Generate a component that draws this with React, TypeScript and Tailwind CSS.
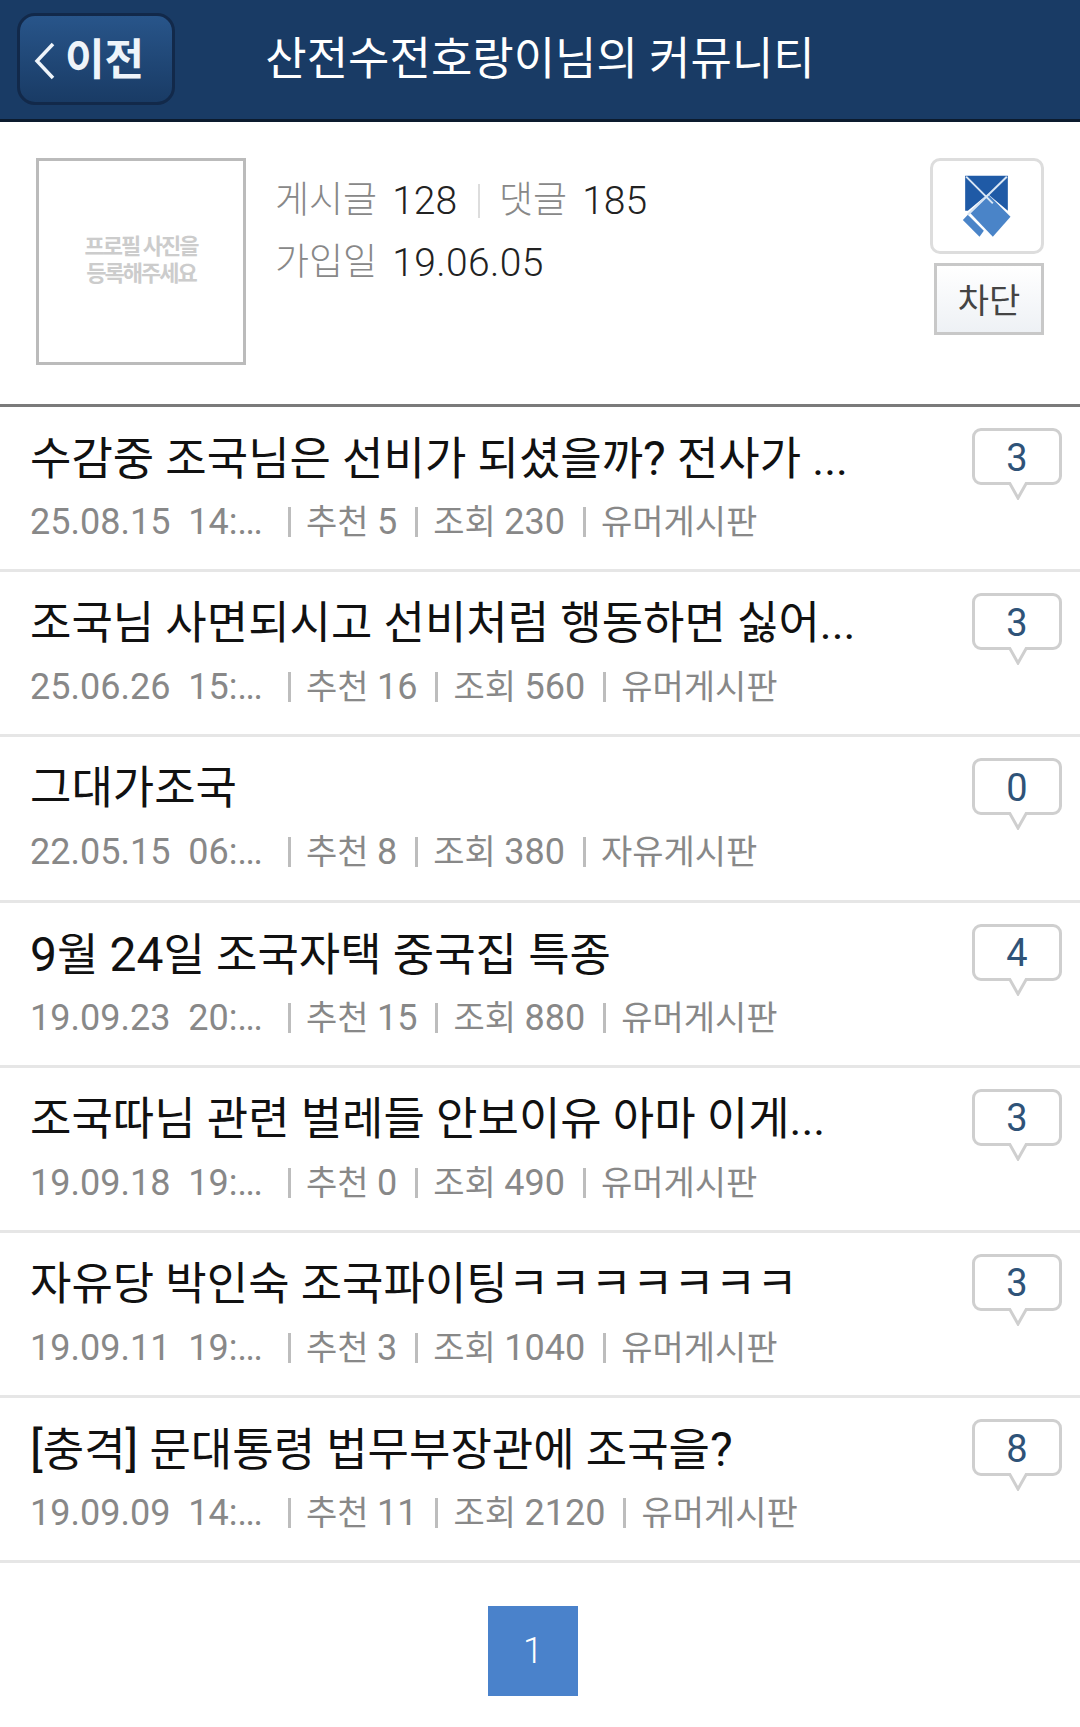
const posts = [
  { title: "수감중 조국님은 선비가 되셨을까? 전사가 ...", date: "25.08.15  14:...", like: 5, view: 230, board: "유머게시판", count: 3 },
  { title: "조국님 사면되시고 선비처럼 행동하면 싫어...", date: "25.06.26  15:...", like: 16, view: 560, board: "유머게시판", count: 3 },
  { title: "그대가조국", date: "22.05.15  06:...", like: 8, view: 380, board: "자유게시판", count: 0 },
  { title: "9월 24일 조국자택 중국집 특종", date: "19.09.23  20:...", like: 15, view: 880, board: "유머게시판", count: 4 },
  { title: "조국따님 관련 벌레들 안보이유 아마 이게...", date: "19.09.18  19:...", like: 0, view: 490, board: "유머게시판", count: 3 },
  { title: "자유당 박인숙 조국파이팅ㅋㅋㅋㅋㅋㅋㅋ", date: "19.09.11  19:...", like: 3, view: 1040, board: "유머게시판", count: 3 },
  { title: "[충격] 문대통령 법무부장관에 조국을?", date: "19.09.09  14:...", like: 11, view: 2120, board: "유머게시판", count: 8 },
]

const Sep = () => <span className="ml-[18px] mr-[15px] inline-block h-[30px] w-[3px] bg-[#bdbdbd]" />

const Bubble = ({ count }: { count: number }) => (
  <div className="relative flex h-[57px] w-[90px] items-center justify-center rounded-[9px] border-[3px] border-[#cfcfcf] bg-white pt-[2px] text-[38px] leading-none text-[#2f5378]">
    {count}
    <svg className="absolute left-[33px] top-[51px]" width="20" height="18" viewBox="0 0 20 18">
      <path d="M1 0 L10 16 L19 0" fill="#fff" stroke="#cfcfcf" strokeWidth="3" />
    </svg>
  </div>
)

// digits and brackets sit a bit larger than the hangul in the titles
const Title = ({ text }: { text: string }) => (
  <>
    {text.split(/([0-9\[\]?]+)/).map((part, i) =>
      i % 2 ? <span key={i} className="text-[48px]">{part}</span> : part
    )}
  </>
)

const PostRow = ({ post }: { post: (typeof posts)[number] }) => (
  <div className="flex h-[165.2px] justify-between border-b-[3px] border-[#e6e6e6] pl-[30px] pr-[18px]">
    <div className="min-w-0 pt-[23px]">
      <div className="h-[58px] whitespace-nowrap text-[45px] leading-[58px] text-[#111]">
        <Title text={post.title} />
      </div>
      <div className="mt-[9px] flex items-center whitespace-pre text-[34px] leading-[50px] text-[#888]">
        <span className="w-[240px] text-[36px]">
          {post.date.slice(0, -3)}
          <span className="tracking-[-1.5px]">...</span>
        </span>
        <Sep />
        <span>추천 <span className="text-[36px]">{post.like}</span></span>
        <Sep />
        <span>조회 <span className="text-[36px]">{post.view}</span></span>
        <Sep />
        <span>{post.board}</span>
      </div>
    </div>
    <div className="pt-[21px]">
      <Bubble count={post.count} />
    </div>
  </div>
)

export default function App() {
  return (
    <div className="flex h-[1727px] w-[1080px] flex-col overflow-hidden bg-white font-['Roboto','Noto_Sans_CJK_KR',sans-serif]">
      {/* header */}
      <header className="grid h-[122px] grid-cols-[190px_1fr_190px] items-center border-b-[3px] border-[#0c1b2e] bg-[#193b65]">
        <button className="ml-[17px] -mt-[2px] flex h-[92px] w-[158px] items-center gap-[10px] rounded-[18px] border-[3px] border-[#12294a] bg-gradient-to-b from-[#28558a] to-[#193b65] pl-[14px] pt-[4px] text-[43px] font-bold text-[#eef4fa]">
          <svg width="21" height="38" viewBox="0 0 21 38" fill="none" stroke="#eef4fa" strokeWidth="3.5">
            <path d="M19 2 L3 19 L19 36" />
          </svg>
          이전
        </button>
        <h1 className="whitespace-nowrap text-center text-[45px] font-normal text-white">산전수전호랑이님의 커뮤니티</h1>
      </header>

      {/* profile */}
      <section className="flex h-[285px] border-b-[3px] border-[#7a7a7a] pl-[36px] pr-[36px] pt-[36px]">
        <div className="flex h-[207px] w-[210px] shrink-0 flex-col items-center justify-center border-[3px] border-[#bbb] pb-[4px] text-center text-[22px] font-bold leading-[27px] tracking-[-2px] text-[#ccc]">
          <span>프로필 사진을</span>
          <span>등록해주세요</span>
        </div>
        <div className="ml-[29px] flex-1 pt-[12px] text-[39px] leading-[62px] text-[#222]">
          <div className="flex items-center">
            <span className="text-[37px] font-light text-[#888]">게시글</span>
            <span className="ml-[15px] font-light">128</span>
            <span className="ml-[21px] mr-[19px] h-[34px] w-[2px] bg-[#ddd]" />
            <span className="text-[37px] font-light text-[#888]">댓글</span>
            <span className="ml-[15px] font-light">185</span>
          </div>
          <div className="flex items-center">
            <span className="text-[37px] font-light text-[#888]">가입일</span>
            <span className="ml-[15px] font-light tracking-[0.4px]">19.06.05</span>
          </div>
        </div>
        <div className="flex w-[114px] shrink-0 flex-col items-end gap-[9px]">
          <div className="flex h-[96px] w-[114px] items-center justify-center rounded-[10px] border-[3px] border-[#ddd] bg-white">
            <svg width="52" height="64" viewBox="485 130 155 192">
              <path d="M497 135 H625 V240 L565 190 L505 240 H497 Z" fill="#1f5aa6" />
              <path d="M565 190 L633 258 L580 318 L510 245 Z" fill="#4a84c8" />
              <path d="M505 252 L553 300 L540 318 L490 268 Z" fill="#4a84c8" />
              <path d="M500 138 L580 218 M622 138 L505 252" stroke="#d9e6f4" strokeWidth="6" fill="none" />
            </svg>
          </div>
          <button className="flex h-[72px] w-[110px] items-center justify-center border-[3px] border-[#c8c8c8] bg-gradient-to-b from-white to-[#eef1f5] pt-[4px] text-[34px] text-[#444]">
            차단
          </button>
        </div>
      </section>

      {/* list */}
      {posts.map((post) => (
        <PostRow key={post.title} post={post} />
      ))}

      {/* paging */}
      <div className="flex justify-center pr-[14px] pt-[43px]">
        <span className="flex h-[90px] w-[90px] items-center justify-center bg-[#4a82cb] text-[36px] font-light text-white">1</span>
      </div>
    </div>
  )
}
